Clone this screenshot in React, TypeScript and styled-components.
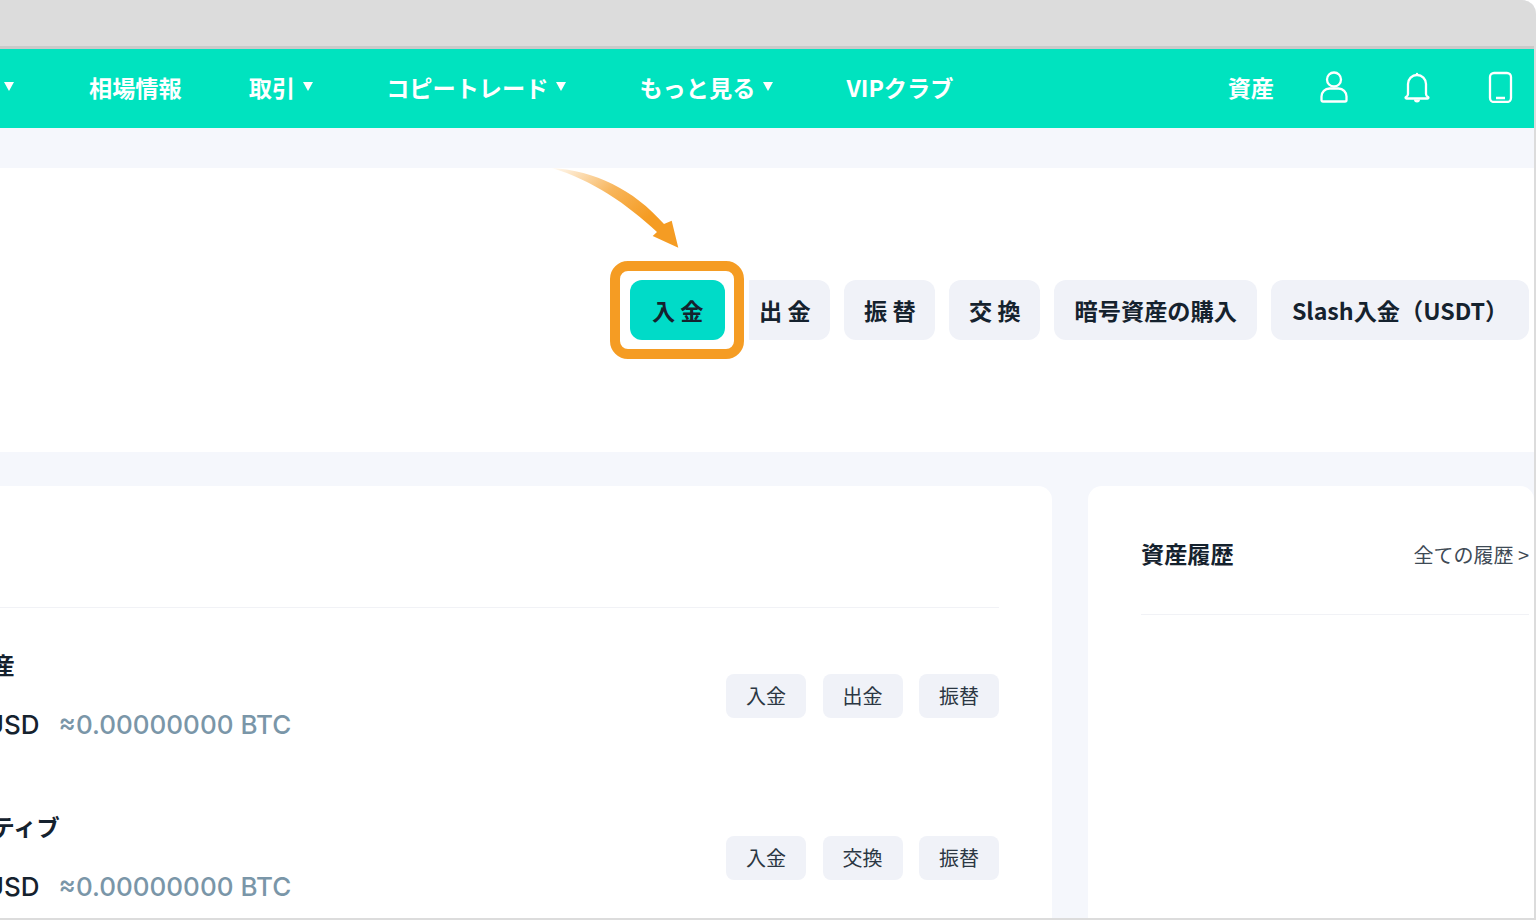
import styled, { createGlobalStyle } from "styled-components";

const GlobalStyle = createGlobalStyle`
  html, body {
    margin: 0;
    padding: 0;
    background: #ffffff;
    overflow: hidden;
  }
  * {
    box-sizing: border-box;
  }
`;

const assetRows = [
  { name: "現物資産", actions: ["入金", "出金", "振替"] },
  { name: "デリバティブ", actions: ["入金", "交換", "振替"] },
];

const heroActions = [
  { label: "出 金", pad: 19.7 },
  { label: "振 替", pad: 19.7 },
  { label: "交 換", pad: 19.7 },
  { label: "暗号資産の購入", pad: 20.3 },
  { label: "Slash入金（USDT）", pad: 20.7 },
];

const ArrowMark = () => (
  <ArrowSvg width="140" height="85" viewBox="0 0 140 85">
    <defs>
      <linearGradient id="arrowFade" x1="0" y1="0" x2="1" y2="0.7">
        <stop offset="0" stopColor="#f59c23" stopOpacity="0.05" />
        <stop offset="0.45" stopColor="#f59c23" stopOpacity="0.75" />
        <stop offset="0.8" stopColor="#f59c23" />
      </linearGradient>
    </defs>
    <path
      d="M7 0C50 3 88 21 119 56L126.7 52.7L133.3 79.7L107.7 68L112 64C82 36 47 12 7 0Z"
      fill="url(#arrowFade)"
    />
  </ArrowSvg>
);

const UserIcon = () => (
  <svg width="28" height="32" viewBox="0 0 28 32" fill="none" stroke="#fff" strokeWidth="2.3">
    <circle cx="14" cy="8.5" r="7" />
    <path d="M3 30.5c-1 0-1.5-.5-1.5-1.5v-3.500a8 8 0 0 1 8-8h9a8 8 0 0 1 8 8V29c0 1-.5 1.500-1.500 1.500Z" />
  </svg>
);

const BellIcon = () => (
  <svg width="28" height="32" viewBox="0 0 28 32" fill="none" stroke="#fff" strokeWidth="2.3">
    <path d="M14 4a9 9 0 0 1 9 9v10c0 1.500 1 2.500 2 3 .8.500.5 1.500-.5 1.500h-21c-1 0-1.300-1-.5-1.500 1-.5 2-1.500 2-3V13a9 9 0 0 1 9-9Z" />
    <circle cx="14" cy="3" r="1.200" fill="#fff" stroke="none" />
    <path d="M11 28.500h6a3 3 0 0 1-6 0Z" fill="#fff" stroke="none" />
  </svg>
);

const PhoneIcon = () => (
  <svg width="28" height="32" viewBox="0 0 28 32" fill="none" stroke="#fff" strokeWidth="2.3">
    <rect x="4" y="2" width="21" height="29" rx="4" />
    <path d="M10 27h9" />
  </svg>
);

const App = () => {
  return (
    <Shell>
      <GlobalStyle />
      <Window>
        <TitleBar />
        <Nav>
          <Caret $lead />
          <NavItem>相場情報</NavItem>
          <NavItem $menu>
            取引
            <Caret />
          </NavItem>
          <NavItem $menu>
            コピートレード
            <Caret />
          </NavItem>
          <NavItem $menu>
            もっと見る
            <Caret />
          </NavItem>
          <NavItem>VIPクラブ</NavItem>
          <NavRight>
            <AssetsLink>資産</AssetsLink>
            <IconSlot>
              <UserIcon />
            </IconSlot>
            <IconSlot>
              <BellIcon />
            </IconSlot>
            <IconSlot>
              <PhoneIcon />
            </IconSlot>
          </NavRight>
        </Nav>
        <Main>
          <Hero>
            <ArrowMark />
            <HeroActions>
              <HeroButton $primary $pad={21.7}>入 金</HeroButton>
              {heroActions.map(action => (
                <HeroButton key={action.label} $pad={action.pad}>{action.label}</HeroButton>
              ))}
            </HeroActions>
          </Hero>
          <Columns>
            <AssetsCard>
              <AssetsHeader />
              {assetRows.map(row => (
                <AssetRow key={row.name}>
                  <AssetInfo>
                    <AssetName>{row.name}</AssetName>
                    <AssetValue>
                      <UsdValue>0.00 USD</UsdValue>
                      <BtcValue>≈0.00000000 BTC</BtcValue>
                    </AssetValue>
                  </AssetInfo>
                  <RowActions>
                    {row.actions.map(action => (
                      <RowButton key={action}>{action}</RowButton>
                    ))}
                  </RowActions>
                </AssetRow>
              ))}
            </AssetsCard>
            <HistoryCard>
              <HistoryHeader>
                <HistoryTitle>資産履歴</HistoryTitle>
                <HistoryLink>全ての履歴 &gt;</HistoryLink>
              </HistoryHeader>
            </HistoryCard>
          </Columns>
        </Main>
      </Window>
    </Shell>
  );
};

const Shell = styled.div`
  width: 1536px;
  height: 920px;
  background: #dcdcdc;
  border-top-right-radius: 14px;
  overflow: hidden;
  font-family: "Noto Sans CJK JP", "Noto Sans", sans-serif;
`;

const Window = styled.div`
  width: 1534px;
  height: 918px;
  background: #f5f7fc;
  overflow: hidden;
  display: flex;
  flex-direction: column;
`;

const TitleBar = styled.div`
  height: 49px;
  flex: none;
  background: #dcdcdc;
  border-bottom: 3px solid #c9c9c9;
`;

const Nav = styled.nav`
  height: 79px;
  flex: none;
  background: #00e3bf;
  display: flex;
  align-items: center;
  padding: 0 20px 4px 4px;
  color: #ffffff;
`;

const NavItem = styled.div<{ $menu?: boolean }>`
  display: flex;
  align-items: center;
  font-size: 23.2px;
  font-weight: 600;
  line-height: 32px;
  white-space: nowrap;
  margin-right: ${props => (props.$menu ? "73px" : "67px")};
`;

const Caret = styled.span<{ $lead?: boolean }>`
  width: 0;
  height: 0;
  flex: none;
  border-left: 5.5px solid transparent;
  border-right: 5.5px solid transparent;
  border-top: 9px solid #ffffff;
  margin-left: ${props => (props.$lead ? "0" : "8px")};
  margin-right: ${props => (props.$lead ? "75px" : "0")};
`;

const NavRight = styled.div`
  margin-left: auto;
  display: flex;
  align-items: center;
  gap: 55px;
`;

const AssetsLink = styled.div`
  font-size: 23.2px;
  font-weight: 700;
  line-height: 32px;
  margin-right: -9px;
`;

const IconSlot = styled.div`
  width: 28px;
  height: 32px;
  display: flex;

  svg {
    display: block;
  }
`;

const Main = styled.main`
  flex: 1;
  padding-top: 40px;
`;

const Hero = styled.section`
  position: relative;
  height: 284px;
  background: #ffffff;
  padding: 112px 5px 0 0;
`;

const ArrowSvg = styled.svg`
  position: absolute;
  left: 545px;
  top: 0;
`;

const HeroActions = styled.div`
  display: flex;
  justify-content: flex-end;
  gap: 14px;
`;

const HeroButton = styled.div<{ $primary?: boolean; $pad: number }>`
  position: relative;
  height: 60px;
  padding: 0 ${props => props.$pad}px;
  border-radius: 12px;
  display: flex;
  align-items: center;
  font-size: 23.2px;
  font-weight: 700;
  white-space: pre;
  color: #15222e;
  background: ${props => (props.$primary ? "#00dbc8" : "#f0f2f8")};

  ${props =>
    props.$primary &&
    `
    z-index: 1;
    &::after {
      content: "";
      position: absolute;
      inset: -19px -19px -19px -20px;
      border: 10px solid #f59c23;
      border-radius: 18px;
      box-shadow: 0 0 0 5px #ffffff;
    }
  `}
`;

const Columns = styled.div`
  display: flex;
  gap: 36px;
  margin: 34px 0 0 -131px;
`;

const AssetsCard = styled.section`
  width: 1183px;
  height: 460px;
  flex: none;
  background: #ffffff;
  border-radius: 14px;
  padding: 0 53px;
`;

const AssetsHeader = styled.div`
  height: 122px;
  border-bottom: 1px solid #f1f2f6;
`;

const AssetRow = styled.div`
  height: 162px;
  padding: 41px 0 27px;
  display: flex;
  justify-content: space-between;
  align-items: center;
`;

const AssetInfo = styled.div`
  display: flex;
  flex-direction: column;
  gap: 28px;
`;

const AssetName = styled.div`
  font-size: 23.2px;
  font-weight: 600;
  line-height: 30px;
  color: #15222e;
`;

const AssetValue = styled.div`
  display: flex;
  gap: 19px;
  margin-left: -1px;
  font-family: Inter, "Liberation Sans", sans-serif;
  font-size: 26px;
  font-weight: 500;
  line-height: 36px;
`;

const UsdValue = styled.span`
  color: #15222e;
`;

const BtcValue = styled.span`
  color: #7a96a8;
`;

const RowActions = styled.div`
  display: flex;
  gap: 16.500px;
`;

const RowButton = styled.div`
  width: 80px;
  height: 44px;
  padding-bottom: 2px;
  border-radius: 8px;
  background: #f0f2f8;
  display: flex;
  align-items: center;
  justify-content: center;
  font-size: 20px;
  color: #2b3743;
`;

const HistoryCard = styled.section`
  width: 446px;
  height: 460px;
  flex: none;
  background: #ffffff;
  border-radius: 14px;
  padding: 0 5px 0 53px;
`;

const HistoryHeader = styled.div`
  height: 129px;
  padding-top: 6px;
  display: flex;
  align-items: center;
  justify-content: space-between;
  border-bottom: 1px solid #f1f2f6;
`;

const HistoryTitle = styled.div`
  font-size: 23.2px;
  font-weight: 700;
  color: #15222e;
`;

const HistoryLink = styled.div`
  font-size: 20px;
  margin-top: 2px;
  color: #3e4a55;
`;

export default App;
